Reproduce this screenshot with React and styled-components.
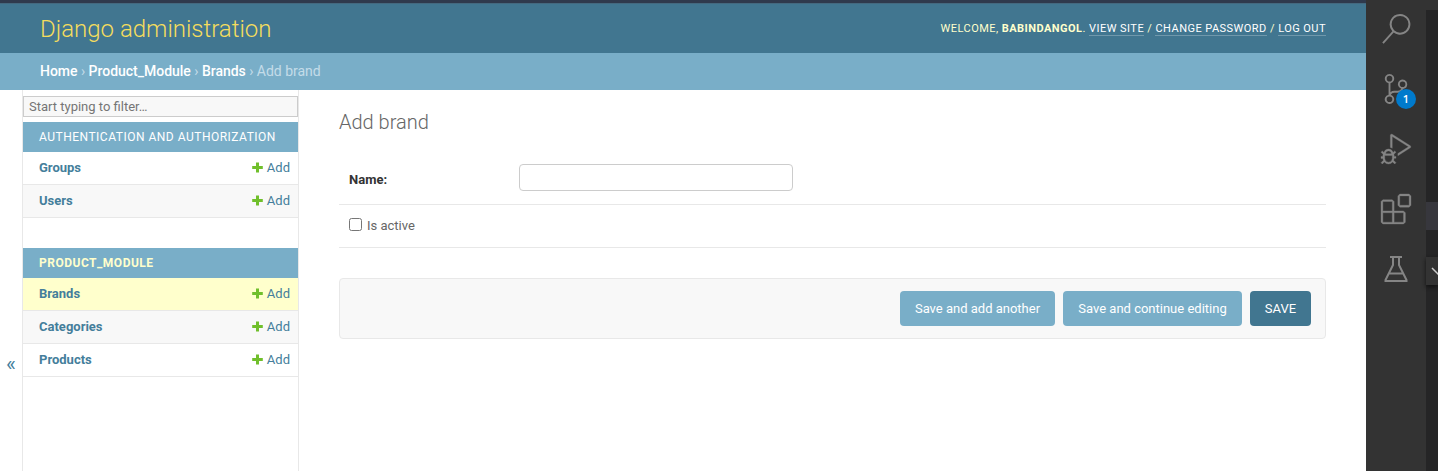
import React from 'react';
import styled, { createGlobalStyle } from 'styled-components';
import { VscDebugAlt, VscExtensions } from 'react-icons/vsc';

const GlobalStyle = createGlobalStyle`
  *, *::before, *::after { box-sizing: border-box; }
  body {
    margin: 0;
    background: #fff;
    color: #333;
    font: 400 14px Roboto, "Liberation Sans", sans-serif;
    overflow: hidden;
  }
`;

const Screen = styled.div`
  display: flex;
  width: 1438px;
  height: 471px;
`;

const Browser = styled.div`
  display: flex;
  flex-direction: column;
  width: 1366px;
  border-top: 3px solid #2f3a4d;
`;

const Header = styled.header`
  display: flex;
  align-items: center;
  justify-content: space-between;
  height: 50px;
  padding: 0 40px;
  border-top: 1px solid #44697f;
  background: #417690;
  color: #ffc;
`;

const SiteName = styled.h1`
  margin: 0 0 0;
  font-size: 24px;
  font-weight: 300;
  line-height: 28px;
  color: #f5dd5d;
`;

const UserTools = styled.div`
  font-size: 11px;
  line-height: 13px;
  letter-spacing: 0.46px;
  text-transform: uppercase;
  white-space: nowrap;
`;

const ToolLink = styled.a`
  border-bottom: 1px solid rgba(255, 255, 255, 0.25);
  color: #fff;
`;

const Breadcrumbs = styled.nav`
  height: 37px;
  padding: 10px 40px;
  background: #79aec8;
  color: #c4dce8;
  font-size: 14px;
  line-height: 16px;
  letter-spacing: -0.02px;
`;

const Crumb = styled.a`
  color: #fff;
  font-weight: 500;
`;

const Main = styled.main`
  display: flex;
  flex: 1;
`;

const NavToggle = styled.button`
  display: flex;
  align-items: flex-start;
  justify-content: center;
  width: 23px;
  padding: 264px 0 0;
  border: 0;
  border-right: 1px solid #e8e8e8;
  background: #fff;
  color: #447e9b;
  font: 400 21px/1 Roboto, sans-serif;
`;

const Sidebar = styled.aside`
  width: 276px;
  padding-top: 6px;
  border-right: 1px solid #e8e8e8;
`;

const Filter = styled.input`
  display: block;
  width: 275px;
  height: 21px;
  margin-bottom: 5px;
  padding: 1px 5px;
  border: 1px solid #ccc;
  border-radius: 0;
  background: #f8f8f8;
  font: 400 13px Roboto, sans-serif;
  &::placeholder { color: #757575; }
`;

const Module = styled.section`
  margin-bottom: 30px;
`;

const Caption = styled.h2`
  height: 30px;
  margin: 0;
  padding: 0 16px;
  background: #79aec8;
  color: ${(p) => (p.$current ? '#ffc' : '#fff')};
  font-size: 12px;
  font-weight: ${(p) => (p.$current ? 700 : 400)};
  line-height: 30px;
  letter-spacing: 0.5px;
  text-transform: uppercase;
`;

const ModelRow = styled.div`
  display: flex;
  justify-content: space-between;
  height: 33px;
  padding: 0 8px 0 16px;
  border-bottom: 1px solid #e8e8e8;
  background: ${(p) => p.$bg};
  color: #447e9b;
  font-size: 13px;
  line-height: 32px;
`;

const ModelName = styled.a`
  font-weight: 700;
`;

const AddLink = styled.a`
  display: flex;
  align-items: center;
  gap: 4px;
  svg { margin-bottom: 2px; }
`;

const Content = styled.div`
  flex: 1;
  padding: 20px 40px;
`;

const Title = styled.h2`
  margin: 0 0 18px;
  font-size: 20px;
  font-weight: 300;
  line-height: 24px;
  color: #666;
`;

const FormRow = styled.div`
  display: flex;
  height: ${(p) => p.$height}px;
  padding: 10px;
  border-bottom: 1px solid #e8e8e8;
  font-size: 13px;
`;

const NameLabel = styled.label`
  width: 170px;
  padding-top: 9px;
  font-weight: 700;
  line-height: 17px;
`;

const TextField = styled.input`
  width: 274px;
  height: 27px;
  margin-top: 2px;
  padding: 5px 6px;
  border: 1px solid #ccc;
  border-radius: 4px;
`;

const Checkbox = styled.input`
  width: 13px;
  height: 13px;
  margin: 3px 5px 0 0;
`;

const CheckLabel = styled.label`
  padding-top: 3px;
  color: #666;
  line-height: 16px;
`;

const SubmitRow = styled.div`
  display: flex;
  justify-content: flex-end;
  gap: 8px;
  height: 61px;
  margin-top: 30px;
  padding: 12px 14px;
  border: 1px solid #e8e8e8;
  border-radius: 4px;
  background: #f8f8f8;
`;

const SubmitButton = styled.button`
  width: ${(p) => p.$width}px;
  height: 35px;
  padding: 0;
  border: 0;
  border-radius: 4px;
  background: ${(p) => (p.$primary ? '#417690' : '#79aec8')};
  color: #fff;
  font: 400 13px Roboto, sans-serif;
  white-space: nowrap;
  text-transform: ${(p) => (p.$primary ? 'uppercase' : 'none')};
`;

const ActivityBar = styled.aside`
  display: flex;
  flex-direction: column;
  align-items: center;
  gap: 30px;
  width: 60px;
  padding-top: 14px;
  background: #333;
  color: #858585;
`;

const Activity = styled.div`
  position: relative;
  width: 30px;
  height: 30px;
  svg { display: block; width: 30px; height: 30px; }
`;

const ThickActivity = styled(Activity)`
  svg { stroke: currentColor; stroke-width: 0.25px; overflow: visible; }
`;

const Badge = styled.span`
  position: absolute;
  left: 15px;
  top: 15px;
  width: 20px;
  height: 20px;
  border-radius: 50%;
  background: #007acc;
  color: #fff;
  font: 600 11px/20px "Open Sans", sans-serif;
  text-align: center;
`;

const EditorEdge = styled.aside`
  display: flex;
  flex-direction: column;
  width: 12px;
  background: #252526;
`;

const EdgeBlock = styled.div`
  height: ${(p) => p.$height}px;
  margin-bottom: ${(p) => p.$after}px;
  background: ${(p) => p.$color};
  box-shadow: ${(p) => (p.$raised ? '0 2px 4px #111' : 'none')};
  svg { display: block; }
`;

const Plus = () => (
  <svg width="11" height="11" viewBox="0 0 11 11">
    <path d="M4 0.5h3v3.5h3.8v3H7v3.5H4V7H.2V4H4z" fill="#70bf2b" />
  </svg>
);

const SearchIcon = () => (
  <svg viewBox="0 0 24 24" fill="currentColor">
    <path d="M15.25 0a8.25 8.25 0 0 0-6.18 13.72L1 22.88l1.12 1 8.05-9.12A8.251 8.251 0 1 0 15.25.01V0zm0 15a6.75 6.75 0 1 1 0-13.5 6.75 6.75 0 0 1 0 13.5z" />
  </svg>
);

const BranchIcon = () => (
  <svg viewBox="0 0 24 24" fill="currentColor">
    <path d="M21.007 8.222A3.738 3.738 0 0 0 15.045 5.2a3.737 3.737 0 0 0 1.156 6.583 2.988 2.988 0 0 1-2.668 1.67h-2.99a4.456 4.456 0 0 0-2.989 1.165V7.4a3.737 3.737 0 1 0-1.494 0v9.117a3.776 3.776 0 1 0 1.816.099 2.99 2.99 0 0 1 2.668-1.667h2.99a4.484 4.484 0 0 0 4.223-3.039 3.736 3.736 0 0 0 3.25-3.687zM4.565 3.738a2.242 2.242 0 1 1 4.484 0 2.242 2.242 0 0 1-4.484 0zm4.484 16.441a2.242 2.242 0 1 1-4.484 0 2.242 2.242 0 0 1 4.484 0zm8.221-9.715a2.242 2.242 0 1 1 0-4.485 2.242 2.242 0 0 1 0 4.485z" />
  </svg>
);

const FlaskIcon = () => (
  <svg viewBox="0 0 30 30" fill="none" stroke="currentColor" strokeWidth="2">
    <path d="M9 3h12M12 3v8L4.5 26v1h21v-1L18 11V3M8 19.5h14" />
  </svg>
);

const Models = ({ items }) =>
  items.map(([name, bg]) => (
    <ModelRow key={name} $bg={bg}>
      <ModelName>{name}</ModelName>
      <AddLink><Plus />Add</AddLink>
    </ModelRow>
  ));

export default function App() {
  return (
    <Screen>
      <GlobalStyle />
      <Browser>
        <Header>
          <SiteName>Django administration</SiteName>
          <UserTools>
            Welcome, <strong>babindangol</strong>. <ToolLink>View site</ToolLink> / <ToolLink>Change password</ToolLink> / <ToolLink>Log out</ToolLink>
          </UserTools>
        </Header>
        <Breadcrumbs>
          <Crumb>Home</Crumb> › <Crumb>Product_Module</Crumb> › <Crumb>Brands</Crumb> › Add brand
        </Breadcrumbs>
        <Main>
          <NavToggle>«</NavToggle>
          <Sidebar>
            <Filter placeholder="Start typing to filter…" />
            <Module>
              <Caption>Authentication and Authorization</Caption>
              <Models items={[['Groups', '#fff'], ['Users', '#f8f8f8']]} />
            </Module>
            <Module>
              <Caption $current>Product_Module</Caption>
              <Models items={[['Brands', '#ffc'], ['Categories', '#f8f8f8'], ['Products', '#fff']]} />
            </Module>
          </Sidebar>
          <Content>
            <Title>Add brand</Title>
            <FormRow $height={53}>
              <NameLabel>Name:</NameLabel>
              <TextField type="text" />
            </FormRow>
            <FormRow $height={43}>
              <Checkbox type="checkbox" id="active" />
              <CheckLabel htmlFor="active">Is active</CheckLabel>
            </FormRow>
            <SubmitRow>
              <SubmitButton $width={155}>Save and add another</SubmitButton>
              <SubmitButton $width={179}>Save and continue editing</SubmitButton>
              <SubmitButton $width={61} $primary>Save</SubmitButton>
            </SubmitRow>
          </Content>
        </Main>
      </Browser>
      <ActivityBar>
        <Activity><SearchIcon /></Activity>
        <Activity><BranchIcon /><Badge>1</Badge></Activity>
        <ThickActivity><VscDebugAlt /></ThickActivity>
        <ThickActivity><VscExtensions /></ThickActivity>
        <Activity><FlaskIcon /></Activity>
      </ActivityBar>
      <EditorEdge>
        <EdgeBlock $height={10} $after={192} $color="#333" />
        <EdgeBlock $height={28} $after={27} $color="#37373d" />
        <EdgeBlock $height={28} $after={0} $color="#333" $raised>
          <svg width="12" height="28" viewBox="0 0 12 28" fill="none" stroke="#ccc" strokeWidth="1.5">
            <path d="M6 11l6 6 6-6" />
          </svg>
        </EdgeBlock>
      </EditorEdge>
    </Screen>
  );
}
